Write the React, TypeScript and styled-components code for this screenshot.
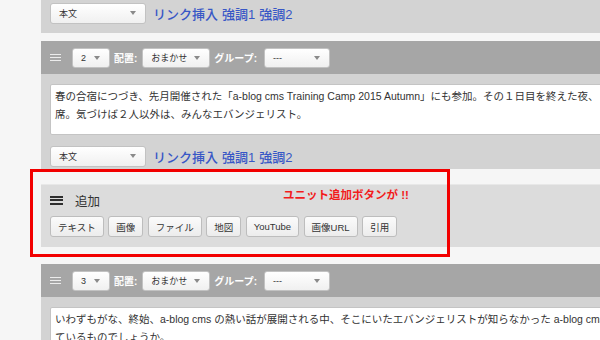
import styled, { createGlobalStyle } from "styled-components";

const Global = createGlobalStyle`
  html, body {
    margin: 0;
    padding: 0;
    background: #f6f6f6;
    font-family: "Liberation Sans", "Noto Sans CJK JP", sans-serif;
    color: #333;
  }
`;

const Page = styled.div`
  position: relative;
  width: 600px;
  height: 340px;
  overflow: hidden;
  padding-left: 41px;
  box-sizing: border-box;
`;

const Unit = styled.div<{ $gap?: number }>`
  margin-bottom: ${(p) => p.$gap ?? 8}px;
`;

const Header = styled.div`
  height: 33px;
  background: #a6a6a6;
  display: flex;
  align-items: center;
  padding-left: 9px;
`;

const Body = styled.div<{ $pad: string }>`
  background: #d3d3d3;
  padding: ${(p) => p.$pad};
`;

const Burger = styled.div<{ $dark?: boolean }>`
  width: ${(p) => (p.$dark ? 13 : 11)}px;
  display: flex;
  flex-direction: column;
  gap: 1.5px;
  margin-right: ${(p) => (p.$dark ? 12 : 11)}px;
  span {
    display: block;
    height: ${(p) => (p.$dark ? 2 : 1.5)}px;
    background: ${(p) => (p.$dark ? "#2e2e2e" : "#ececec")};
  }
`;

const Select = styled.div<{ $w: number; $h?: number }>`
  position: relative;
  width: ${(p) => p.$w}px;
  height: ${(p) => p.$h ?? 20}px;
  box-sizing: border-box;
  border: 1px solid #c2c2c2;
  border-radius: 3px;
  background: linear-gradient(#ffffff, #f0f0f0);
  font-size: 9px;
  color: #333;
  display: flex;
  align-items: center;
  padding-left: 8px;
  flex: none;
  &::after {
    content: "";
    position: absolute;
    right: 9px;
    top: 50%;
    margin-top: -2px;
    border-left: 3px solid transparent;
    border-right: 3px solid transparent;
    border-top: 4px solid #8a8a8a;
  }
`;

const Label = styled.span<{ $ml: number }>`
  color: #fff;
  font-weight: bold;
  font-size: 10px;
  margin: 0 ${(p) => p.$ml}px 0 4px;
`;

const Toolbar = styled.div`
  display: flex;
  align-items: center;
  height: 22px;
`;

const Links = styled.div`
  margin-left: 7px;
  font-size: 13px;
  font-weight: 500;
  color: #3857c6;
  display: flex;
  gap: 4px;
  white-space: nowrap;
`;

const TextBox = styled.div`
  width: 620px;
  height: 51px;
  box-sizing: border-box;
  background: #fff;
  border: 1px solid #c4c4c4;
  border-radius: 2px;
  padding: 2px 0 0 4px;
  margin-bottom: 10px;
  font-size: 10.5px;
  line-height: 18px;
  color: #333;
  white-space: nowrap;
  overflow: hidden;
`;

const AddPanel = styled.div`
  height: 63px;
  box-sizing: border-box;
  background: #dcdcdc;
  border-top: 1px solid #e8e8e8;
  padding: 7px 0 0 9px;
  margin-bottom: 17px;
`;

const AddTitle = styled.div`
  display: flex;
  align-items: center;
  height: 16px;
  font-size: 12.5px;
  color: #333;
  margin-bottom: 8px;
`;

const ButtonRow = styled.div`
  display: flex;
  gap: 4.5px;
`;

const Btn = styled.div`
  height: 21px;
  box-sizing: border-box;
  padding: 0 7px;
  border: 1px solid #bdbdbd;
  border-radius: 3px;
  background: linear-gradient(#fbfbfb, #ececec);
  font-size: 9.5px;
  color: #333;
  display: flex;
  align-items: center;
`;

const Callout = styled.div`
  position: absolute;
  left: 30px;
  top: 169px;
  width: 420px;
  height: 88px;
  box-sizing: border-box;
  border: 3px solid #f20000;
`;

const CalloutText = styled.div`
  position: absolute;
  left: 250px;
  top: 14px;
  font-size: 11.5px;
  font-weight: bold;
  color: #f21c1c;
  white-space: nowrap;
`;

function Burger3({ dark }: { dark?: boolean }) {
  return (
    <Burger $dark={dark}>
      <span />
      <span />
      <span />
    </Burger>
  );
}

function FormatBar() {
  return (
    <Toolbar>
      <Select $w={96} $h={21}>本文</Select>
      <Links>
        <span>リンク挿入</span>
        <span>強調1</span>
        <span>強調2</span>
      </Links>
    </Toolbar>
  );
}

function UnitHeader({ n }: { n: number }) {
  return (
    <Header>
      <Burger3 />
      <Select $w={38}>{n}</Select>
      <Label $ml={5}>配置:</Label>
      <Select $w={68}>おまかせ</Select>
      <Label $ml={7}>グループ:</Label>
      <Select $w={66}>---</Select>
    </Header>
  );
}

const buttons = ["テキスト", "画像", "ファイル", "地図", "YouTube", "画像URL", "引用"];

export default function App() {
  return (
    <>
      <Global />
      <Page>
        <Unit>
          <Body $pad="2px 0 9px 9px">
            <FormatBar />
          </Body>
        </Unit>

        <Unit $gap={15}>
          <UnitHeader n={2} />
          <Body $pad="10px 0 2px 9px">
            <TextBox>
              春の合宿につづき、先月開催された「a-blog cms Training Camp 2015 Autumn」にも参加。その１日目を終えた夜、
              <br />
              席。気づけば２人以外は、みんなエバンジェリスト。
            </TextBox>
            <FormatBar />
          </Body>
        </Unit>

        <AddPanel>
          <AddTitle>
            <Burger3 dark />
            追加
          </AddTitle>
          <ButtonRow>
            {buttons.map((b) => (
              <Btn key={b}>{b}</Btn>
            ))}
          </ButtonRow>
        </AddPanel>

        <Unit>
          <UnitHeader n={3} />
          <Body $pad="10px 0 2px 9px">
            <TextBox>
              いわずもがな、終始、a-blog cms の熱い話が展開される中、そこにいたエバンジェリストが知らなかった a-blog cms の機能は
              <br />
              ているものでしょうか。
            </TextBox>
          </Body>
        </Unit>

        <Callout>
          <CalloutText>ユニット追加ボタンが !!</CalloutText>
        </Callout>
      </Page>
    </>
  );
}
